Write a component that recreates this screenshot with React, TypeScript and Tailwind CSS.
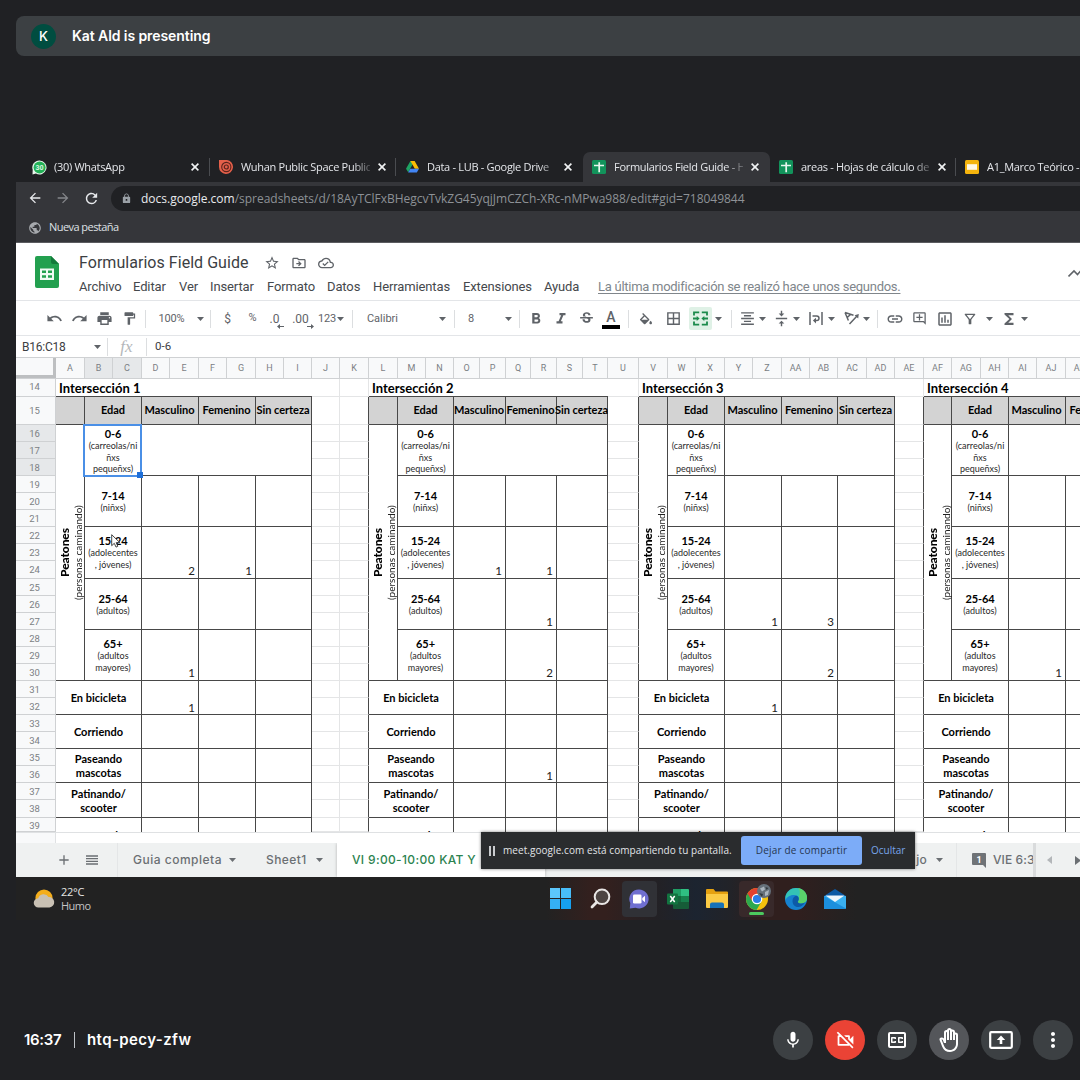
import React from 'react';
import type { ReactNode } from 'react';
import {
  MdAdd,
  MdArrowBack,
  MdArrowForward,
  MdBorderAll,
  MdFormatAlignCenter,
  MdFormatBold,
  MdFormatColorFill,
  MdFormatItalic,
  MdFormatPaint,
  MdFunctions,
  MdLink,
  MdLock,
  MdMic,
  MdMoreVert,
  MdOutlineAddComment,
  MdOutlineAssessment,
  MdOutlineBackHand,
  MdOutlineClosedCaption,
  MdOutlineCloudDone,
  MdOutlineDriveFileMove,
  MdOutlineFilterAlt,
  MdOutlineVideocamOff,
  MdPrint,
  MdPublic,
  MdRedo,
  MdRefresh,
  MdReorder,
  MdStarBorder,
  MdStrikethroughS,
  MdUndo,
  MdVerticalAlignCenter,
} from 'react-icons/md';

/* ---------- shared bits ---------- */

const Caret = () => (
  <svg className="h-[4px] w-[7px] shrink-0" viewBox="0 0 7 4" fill="currentColor">
    <path d="M0 0h7L3.500 4z" />
  </svg>
);

const Slot = ({ w, children }: { w: string; children?: ReactNode }) => (
  <div className={`flex h-full shrink-0 items-center justify-center whitespace-nowrap ${w}`}>{children}</div>
);

const Sep = ({ w }: { w: string }) => (
  <Slot w={w}>
    <div className="h-[18px] w-px bg-[#dcdee0]" />
  </Slot>
);

/* ---------- brand icons ---------- */

const WhatsAppIcon = () => (
  <svg className="size-[15px]" viewBox="0 0 15 15">
    <path d="M7.500.5a7 7 0 1 1-3.600 13L.5 14.500.7 9.800A7 7 0 0 1 7.500.5z" fill="#e9f5ec" />
    <circle cx="7.600" cy="7.400" r="6" fill="#23b257" />
    <text x="7.600" y="9.900" textAnchor="middle" fontSize="7" fontWeight="700" fill="#d9f3e1" fontFamily="Roboto, sans-serif">30</text>
  </svg>
);

const TargetIcon = () => (
  <svg className="size-[14px]" viewBox="0 0 14 14">
    <path d="M0 0h8a7 7 0 1 1-8 7z" fill="#e5604a" />
    <circle cx="7.300" cy="7" r="4.600" fill="none" stroke="#5a241d" strokeWidth="1.100" />
    <circle cx="7.300" cy="7" r="2" fill="none" stroke="#5a241d" strokeWidth="1.200" />
  </svg>
);

const DriveIcon = () => (
  <svg className="ml-px h-[12px] w-[13px]" viewBox="0 0 13 12">
    <path d="M4.400 0h4.200L4.300 7.500 2.200 11.300 0 7.700z" fill="#1ea362" />
    <path d="M4.400 0h4.200L13 7.700H8.800z" fill="#fbbc04" />
    <path d="M4.300 7.700H13l-2.200 3.900H2.100z" fill="#4285f4" />
  </svg>
);

const SheetsTabIcon = () => (
  <svg className="size-[14px]" viewBox="0 0 14 14">
    <rect width="14" height="14" rx="1.500" fill="#12935b" />
    <path d="M7.200 2.200v10M2 5.500h10" stroke="#e8f6ef" strokeWidth="1.700" />
  </svg>
);

const SlidesTabIcon = () => (
  <svg className="size-[14px]" viewBox="0 0 14 14">
    <rect width="14" height="14" rx="1.500" fill="#f5b40d" />
    <rect x="2" y="4.200" width="10" height="5.600" fill="#fff8e6" />
  </svg>
);

const SheetsLogo = () => (
  <svg className="h-[32px] w-[24px]" viewBox="0 0 24 32">
    <path d="M2 0h14l8 8v22a2 2 0 0 1-2 2H2a2 2 0 0 1-2-2V2a2 2 0 0 1 2-2z" fill="#23a04f" />
    <path d="M16 0l8 8h-6a2 2 0 0 1-2-2z" fill="#147a3b" />
    <path d="M5 12.500h14V24H5zM7 14.600v2.500h4v-2.500zm6 0v2.500h4v-2.500zM7 19.200v2.600h4v-2.600zm6 0v2.600h4v-2.600z" fill="#f1faf4" fillRule="evenodd" />
  </svg>
);

/* ---------- browser chrome ---------- */

type TabProps = { icon: ReactNode; title: string; width: string; active?: boolean; divider?: boolean };

const BrowserTab = ({ icon, title, width, active, divider }: TabProps) => (
  <div className={`relative flex h-[30px] shrink-0 items-center pl-[10px] ${width} ${active ? 'rounded-t-[7px] bg-[#35363a]' : ''}`}>
    <div className="-ml-px flex w-[22px] shrink-0 items-center">{icon}</div>
    <div className="w-[129px] overflow-hidden text-[11px] leading-[16px] tracking-[-0.3px] whitespace-nowrap text-[#e4e6ea] [mask-image:linear-gradient(to_right,black_112px,transparent_134px)]">
      {title}
    </div>
    <svg className="ml-[8px] size-[8px] shrink-0" viewBox="0 0 8 8" fill="none" stroke="#f1f3f4" strokeWidth="1.600">
      <path d="M.6.600l6.800 6.800M7.400.600L.6 7.400" />
    </svg>
    {divider && <div className="absolute top-[6px] right-0 h-[18px] w-px bg-[#4a4c50]" />}
  </div>
);

const BrowserChrome = () => (
  <div className="font-['Open_Sans',sans-serif]">
    <div className="flex h-[30px] overflow-hidden bg-[#202124] pl-[7px]">
      <BrowserTab icon={<WhatsAppIcon />} title="(30) WhatsApp" width="w-[187px]" divider />
      <BrowserTab icon={<TargetIcon />} title="Wuhan Public Space Public Life" width="w-[186px]" divider />
      <BrowserTab icon={<DriveIcon />} title="Data - LUB - Google Drive" width="w-[187px]" />
      <BrowserTab icon={<SheetsTabIcon />} title="Formularios Field Guide - Hojas" width="w-[187px]" active />
      <BrowserTab icon={<SheetsTabIcon />} title="areas - Hojas de cálculo de Google" width="w-[186px]" divider />
      <BrowserTab icon={<SlidesTabIcon />} title="A1_Marco Teórico - Pres" width="w-[186px]" />
    </div>
    <div className="flex h-[32px] items-center bg-[#35363a] pl-[11px]">
      <MdArrowBack className="size-[16px] text-[#e8eaed]" />
      <MdArrowForward className="ml-[12px] size-[16px] text-[#84868a]" />
      <MdRefresh className="ml-[12px] size-[17px] text-[#e8eaed]" />
      <div className="mt-px ml-[11px] flex h-[25px] flex-1 items-center overflow-hidden rounded-l-full bg-[#202124] pl-[10px] text-[12px] whitespace-nowrap">
        <MdLock className="size-[11px] text-[#9aa0a6]" />
        <span className="ml-[9px] text-[#e8eaed]">docs.google.com</span>
        <span className="tracking-[-0.02px] text-[#8d9196]">/spreadsheets/d/18AyTClFxBHegcvTvkZG45yqjJmCZCh-XRc-nMPwa988/edit#gid=718049844</span>
      </div>
    </div>
    <div className="flex h-[29px] items-center border-b border-[#5b5c60] bg-[#35363a] pl-[12px]">
      <MdPublic className="size-[14px] text-[#a6a9ad]" />
      <span className="mb-px ml-[7px] text-[11px] tracking-[-0.55px] text-[#dfe1e5]">Nueva pestaña</span>
    </div>
  </div>
);

/* ---------- sheets header ---------- */

const DocHeader = () => (
  <div className="relative h-[58px] border-b border-[#e3e5e8] font-['Roboto',sans-serif]">
    <div className="flex">
      <div className="w-[63px] shrink-0 pt-[13px] pl-[19px]">
        <SheetsLogo />
      </div>
      <div>
        <div className="flex h-[32px] items-center pt-[8px] text-[#5f6368]">
          <span className="text-[16px] tracking-[0.04px] text-[#3c4043]">Formularios Field Guide</span>
          <MdStarBorder className="ml-[16px] size-[16px]" />
          <MdOutlineDriveFileMove className="ml-[11px] size-[16px]" />
          <MdOutlineCloudDone className="ml-[11px] size-[16px]" />
        </div>
        <div className="flex h-[24px] items-center whitespace-nowrap text-[13px] tracking-[-0.12px] text-[#45484c]">
          <span className="w-[54px]">Archivo</span>
          <span className="w-[46px]">Editar</span>
          <span className="w-[31px]">Ver</span>
          <span className="w-[57px]">Insertar</span>
          <span className="w-[60px]">Formato</span>
          <span className="w-[46px]">Datos</span>
          <span className="w-[90px]">Herramientas</span>
          <span className="w-[81px]">Extensiones</span>
          <span className="w-[54px]">Ayuda</span>
          <span className="tracking-[-0.27px] text-[#80868b] underline underline-offset-[2px]">La última modificación se realizó hace unos segundos.</span>
        </div>
      </div>
    </div>
    <svg className="absolute top-[25px] right-0 h-[10px] w-[12px]" viewBox="0 0 12 10" fill="none" stroke="#5f6368" strokeWidth="1.600">
      <path d="M.5 8.500L6 3l3.500 3.500L13 2.500" />
    </svg>
  </div>
);

const MergeIcon = () => (
  <svg className="size-[15px]" viewBox="0 0 15 15" fill="none" stroke="#1b8a4b" strokeWidth="1.800">
    <path d="M1 4.500V1.300h5.200M8.800 1.300H14v3.200M14 10.500v3.200H8.800M6.200 13.700H1v-3.200M0 7.500h5M15 7.500h-5" />
    <path d="M3.700 4.900L6.600 7.500 3.700 10.100zM11.300 4.900L8.400 7.500l2.900 2.600z" fill="#1b8a4b" stroke="none" />
  </svg>
);

const WrapIcon = () => (
  <svg className="h-[13px] w-[14px]" viewBox="0 0 14 13" fill="none" stroke="currentColor" strokeWidth="1.500">
    <path d="M1 0v13M13 0v13M3.500 4h4.200a2.200 2.200 0 0 1 0 4.600H5" />
    <path d="M7 5.800v5.600L3.900 8.600z" fill="currentColor" stroke="none" />
  </svg>
);

const RotateIcon = () => (
  <svg className="size-[15px]" viewBox="0 0 15 15" fill="none" stroke="currentColor" strokeWidth="1.500">
    <path d="M1 1.500l8.500 2.700M1 1.500l3.400 8M3.200 6.400L6.600 3.500M5.500 13l7.500-8" />
    <path d="M14.800 3l-.6 4.600-3.600-3.400z" fill="currentColor" stroke="none" />
  </svg>
);

const Decimals = ({ label, right }: { label: string; right?: boolean }) => (
  <div className="relative leading-none">
    {label}
    <svg className="absolute top-[11px] right-[-5px] h-[5px] w-[7px]" viewBox="0 0 7 5" fill="currentColor">
      {right ? <path d="M7 2.500L4 0v2H0v1h4v2z" /> : <path d="M0 2.500L3 0v2h4v1H3v2z" />}
    </svg>
  </div>
);

const Toolbar = () => (
  <div className="flex h-[35px] items-center border-b border-[#e3e5e8] pt-px pl-[25px] font-['Roboto',sans-serif] text-[11px] text-[#5f6368]">
    <Slot w="w-[26px]"><MdUndo className="size-[17px]" /></Slot>
    <Slot w="w-[25px]"><MdRedo className="size-[17px]" /></Slot>
    <Slot w="w-[25px]"><MdPrint className="size-[17px]" /></Slot>
    <Slot w="w-[25px]"><MdFormatPaint className="size-[15px]" /></Slot>
    <Sep w="w-[7px]" />
    <Slot w="w-[45px]"><span className="pt-px tracking-[-0.2px]">100%</span></Slot>
    <Slot w="w-[12px]"><Caret /></Slot>
    <Sep w="w-[9px]" />
    <Slot w="w-[25px]"><span className="text-[12px]">$</span></Slot>
    <Slot w="w-[25px]">%</Slot>
    <Slot w="w-[19px]"><span className="text-[12px]"><Decimals label=".0" /></span></Slot>
    <Slot w="w-[33px]"><span className="text-[12px]"><Decimals label=".00" right /></span></Slot>
    <Slot w="w-[20px]"><span className="pt-px text-[11px] tracking-[-0.2px]">123</span></Slot>
    <Slot w="w-[6px]"><Caret /></Slot>
    <Sep w="w-[19px]" />
    <Slot w="w-[41px]"><span className="pt-px">Calibri</span></Slot>
    <Slot w="w-[33px]" />
    <Slot w="w-[12px]"><Caret /></Slot>
    <Sep w="w-[12px]" />
    <Slot w="w-[22px]"><span className="pt-px">8</span></Slot>
    <Slot w="w-[20px]" />
    <Slot w="w-[13px]"><Caret /></Slot>
    <Sep w="w-[9px]" />
    <Slot w="w-[24px]"><MdFormatBold className="size-[18px] shrink-0" /></Slot>
    <Slot w="w-[26px]"><MdFormatItalic className="size-[18px] shrink-0" /></Slot>
    <Slot w="w-[24px]"><MdStrikethroughS className="size-[17px] shrink-0" /></Slot>
    <Slot w="w-[26px]">
      <div className="flex flex-col items-center pt-px">
        <span className="text-[14px] leading-[14px] font-medium">A</span>
        <span className="mt-px h-[4px] w-[18px] bg-black" />
      </div>
    </Slot>
    <Sep w="w-[9px]" />
    <Slot w="w-[26px]">
      {/* bucket without its base bar */}
      <div className="h-[12px] overflow-hidden"><MdFormatColorFill className="size-[16px] shrink-0" /></div>
    </Slot>
    <Slot w="w-[28px]"><MdBorderAll className="size-[17px] shrink-0" /></Slot>
    <Slot w="w-[26px]">
      <div className="flex size-[23px] items-center justify-center rounded-[2px] bg-[#dff1e6]"><MergeIcon /></div>
    </Slot>
    <Slot w="w-[11px]"><Caret /></Slot>
    <Sep w="w-[14px]" />
    <Slot w="w-[18px]"><MdFormatAlignCenter className="size-[17px] shrink-0" /></Slot>
    <Slot w="w-[12px]"><Caret /></Slot>
    <Slot w="w-[4px]" />
    <Slot w="w-[19px]"><MdVerticalAlignCenter className="size-[17px] shrink-0" /></Slot>
    <Slot w="w-[11px]"><Caret /></Slot>
    <Slot w="w-[4px]" />
    <Slot w="w-[20px]"><WrapIcon /></Slot>
    <Slot w="w-[10px]"><Caret /></Slot>
    <Slot w="w-[4px]" />
    <Slot w="w-[22px]"><RotateIcon /></Slot>
    <Slot w="w-[8px]"><Caret /></Slot>
    <Sep w="w-[15px]" />
    <Slot w="w-[19px]"><MdLink className="size-[18px] shrink-0" /></Slot>
    <Slot w="w-[31px]"><MdOutlineAddComment className="size-[15px] shrink-0" /></Slot>
    <Slot w="w-[19px]"><MdOutlineAssessment className="size-[18px] shrink-0" /></Slot>
    <Slot w="w-[31px]"><MdOutlineFilterAlt className="size-[16px] shrink-0" /></Slot>
    <Slot w="w-[9px]"><Caret /></Slot>
    <Slot w="w-[30px]"><MdFunctions className="size-[18px] shrink-0" /></Slot>
    <Slot w="w-px"><Caret /></Slot>
  </div>
);

const FormulaBar = () => (
  <div className="flex h-[21px] items-center font-['Roboto',sans-serif] text-[12px] text-[#3c4043]">
    <span className="w-[76px] pl-[6px] tracking-[-0.24px]">B16:C18</span>
    <span className="flex w-[11px] justify-center text-[#5f6368]"><Caret /></span>
    <Sep w="w-[9px]" />
    <span className="w-[29px] text-center font-['Liberation_Serif',serif] text-[17px] leading-[20px] text-[#b4b7ba] italic">fx</span>
    <Sep w="w-[11px]" />
    <span className="ml-[3px] text-[11.500px]">0-6</span>
  </div>
);

/* ---------- grid ---------- */

const columns: [string, string, boolean?][] = [
  ['A', 'w-[29px]'], ['B', 'w-[28px]', true], ['C', 'w-[29px]', true], ['D', 'w-[28px]'], ['E', 'w-[29px]'],
  ['F', 'w-[28px]'], ['G', 'w-[29px]'], ['H', 'w-[28px]'], ['I', 'w-[28px]'], ['J', 'w-[28px]'], ['K', 'w-[29px]'],
  ['L', 'w-[29px]'], ['M', 'w-[28px]'], ['N', 'w-[28px]'], ['O', 'w-[26px]'], ['P', 'w-[26px]'], ['Q', 'w-[25px]'],
  ['R', 'w-[26px]'], ['S', 'w-[26px]'], ['T', 'w-[25px]'], ['U', 'w-[31px]'], ['V', 'w-[29px]'], ['W', 'w-[28px]'],
  ['X', 'w-[29px]'], ['Y', 'w-[28px]'], ['Z', 'w-[29px]'], ['AA', 'w-[28px]'], ['AB', 'w-[28px]'], ['AC', 'w-[29px]'],
  ['AD', 'w-[28px]'], ['AE', 'w-[29px]'], ['AF', 'w-[28px]'], ['AG', 'w-[29px]'], ['AH', 'w-[28px]'], ['AI', 'w-[28px]'],
  ['AJ', 'w-[29px]'], ['AK', 'w-[28px]'],
];

const rowHeights = [
  'h-[18px]', 'h-[28px]', 'h-[17px]', 'h-[17px]', 'h-[17px]', 'h-[17px]', 'h-[17px]', 'h-[17px]', 'h-[17px]',
  'h-[17px]', 'h-[18px]', 'h-[17px]', 'h-[17px]', 'h-[17px]', 'h-[17px]', 'h-[17px]', 'h-[17px]', 'h-[17px]',
  'h-[17px]', 'h-[17px]', 'h-[17px]', 'h-[17px]', 'h-[17px]', 'h-[17px]', 'h-[18px]', 'h-[14px]',
];

const ColumnHeaders = () => (
  <div className="flex h-[22px] overflow-hidden border-t border-b border-[#cfd1d3] bg-[#f8f9fa] font-['Roboto',sans-serif] text-[9px] text-[#7b7f84]">
    <div className="w-[40px] shrink-0 border-r-[3px] border-b-[3px] border-[#bdbfc1]" />
    {columns.map(([name, width, selected]) => (
      <div key={name} className={`flex shrink-0 items-center justify-center border-r border-[#cfd1d3] pt-px ${width} ${selected ? 'bg-[#e6e8ea]' : ''}`}>
        {name}
      </div>
    ))}
  </div>
);

const RowHeaders = () => (
  <div className="w-[40px] shrink-0 font-['Roboto',sans-serif] text-[9.500px] leading-[15px] text-[#7b7f84]">
    {rowHeights.map((h, i) => (
      <div
        key={i}
        className={`flex justify-center overflow-hidden border-r border-b border-[#cfd1d3] pr-[2px] ${h} ${i === 0 || i === 25 ? '' : i === 1 ? 'pt-[6px]' : 'pt-px'} ${i >= 2 && i <= 4 ? 'bg-[#e6e8ea]' : 'bg-[#f8f9fa]'}`}
      >
        {i + 14}
      </div>
    ))}
  </div>
);

const Gutter = ({ cols }: { cols: string[] }) => (
  <>
    {cols.map((w, c) => (
      <div key={c} className={`shrink-0 ${w}`}>
        {rowHeights.map((h, i) => (
          <div key={i} className={`border-b border-b-[#e4e5e6] border-r ${h} ${c === cols.length - 1 && i > 0 ? 'border-r-[#484848]' : 'border-r-[#e4e5e6]'}`} />
        ))}
      </div>
    ))}
  </>
);

const ages: { label: string; notes: string[]; tall?: boolean }[] = [
  { label: '0-6', notes: ['(carreolas/ni', 'ñxs', 'pequeñxs)'] },
  { label: '7-14', notes: ['(niñxs)'] },
  { label: '15-24', notes: ['(adolecentes', ', jóvenes)'], tall: true },
  { label: '25-64', notes: ['(adultos)'] },
  { label: '65+', notes: ['(adultos', 'mayores)'] },
];

const activities: [string[], string][] = [
  [['En bicicleta'], 'h-[34px]'],
  [['Corriendo'], 'h-[34px]'],
  [['Paseando', 'mascotas'], 'h-[34px]'],
  [['Patinando/', 'scooter'], 'h-[35px]'],
  [['Esperando'], 'h-[14px]'],
];

const LINE = 'border-[#484848]';

type BlockProps = {
  title: string;
  first: string;
  label: string;
  wide: string;
  data: [string, string, string];
  values: Record<string, number>;
};

const Block = ({ title, first, label, wide, data, values }: BlockProps) => (
  <div className="shrink-0 font-['Lato',sans-serif] text-[11px] text-black">
    <div className={`h-[18px] border-b pl-[3px] text-[13px] leading-[18px] font-bold ${LINE}`}>{title}</div>
    <div className="flex h-[28px] font-bold">
      <div className={`border-r border-b bg-[#d3d3d3] ${first} ${LINE}`} />
      <div className={`flex items-center justify-center border-r border-b bg-[#d3d3d3] ${label} ${LINE}`}>Edad</div>
      {['Masculino', 'Femenino', 'Sin certeza'].map((t, i) => (
        <div key={t} className={`flex items-center justify-center border-r border-b bg-[#d3d3d3] whitespace-nowrap ${data[i]} ${LINE}`}>
          <span className="-ml-px shrink-0 tracking-[-0.04px]">{t}</span>
        </div>
      ))}
    </div>
    <div className="flex">
      <div className={`flex justify-center border-r border-b ${first} ${LINE}`}>
        <div className="ml-[2px] flex shrink-0 rotate-180 flex-col items-center justify-center text-center whitespace-nowrap [writing-mode:vertical-rl]">
          <div className="text-[12px] leading-[15px] font-black tracking-[-0.1px]">Peatones</div>
          <div className="text-[10px] leading-[13px] text-[#222]">(personas caminando)</div>
        </div>
      </div>
      <div>
        {ages.map(({ label: age, notes, tall }, r) => (
          <div key={age} className={`flex ${tall ? 'h-[52px]' : 'h-[51px]'}`}>
            <div className={`flex flex-col items-center justify-center border-r border-b text-center ${notes.length === 3 ? 'pt-[2px]' : ''} ${label} ${LINE}`}>
              <div className="leading-[13px] font-bold tracking-[-0.1px]">{age}</div>
              {notes.map((n) => (
                <div key={n} className={`text-[9px] whitespace-nowrap text-[#2a2a2a] ${notes.length === 3 ? 'leading-[11.500px]' : 'leading-[12px]'}`}>{n}</div>
              ))}
            </div>
            {data.map((w, c) => (
              <div key={c} className={`flex items-end justify-end border-b pr-[3px] text-[11.500px] leading-[14px] text-[#222] ${w} ${LINE} ${r > 0 || c === 2 ? 'border-r' : ''}`}>
                {values[`${r},${c}`]}
              </div>
            ))}
          </div>
        ))}
      </div>
    </div>
    {activities.map(([lines, h], r) => (
      <div key={r} className={`flex ${h}`}>
        <div className={`flex shrink-0 flex-col items-center overflow-hidden border-r font-bold ${r === 4 ? 'justify-start pt-[11px]' : 'justify-center border-b pt-px'} ${wide} ${LINE}`}>
          {lines.map((t) => (
            <div key={t} className="leading-[14px]">{t}</div>
          ))}
        </div>
        {data.map((w, c) => (
          <div key={c} className={`flex items-end justify-end border-r pr-[3px] text-[11.500px] leading-[13px] text-[#222] ${r === 4 ? '' : 'border-b'} ${w} ${LINE}`}>
            {values[`${r + 5},${c}`]}
          </div>
        ))}
      </div>
    ))}
  </div>
);

const Grid = () => (
  <div className="relative flex h-[453px] overflow-hidden bg-white">
    <RowHeaders />
    <Block title="Intersección 1" first="w-[29px]" label="w-[57px]" wide="w-[86px]" data={['w-[57px]', 'w-[57px]', 'w-[56px]']} values={{ '2,0': 2, '2,1': 1, '4,0': 1, '5,0': 1 }} />
    <Gutter cols={['w-[28px]', 'w-[29px]']} />
    <Block title="Intersección 2" first="w-[29px]" label="w-[56px]" wide="w-[85px]" data={['w-[52px]', 'w-[51px]', 'w-[51px]']} values={{ '2,0': 1, '2,1': 1, '3,1': 1, '4,1': 2, '7,1': 1 }} />
    <Gutter cols={['w-[31px]']} />
    <Block title="Intersección 3" first="w-[29px]" label="w-[57px]" wide="w-[86px]" data={['w-[57px]', 'w-[56px]', 'w-[57px]']} values={{ '3,0': 1, '3,1': 3, '4,1': 2, '5,0': 1 }} />
    <Gutter cols={['w-[29px]']} />
    <Block title="Intersección 4" first="w-[28px]" label="w-[57px]" wide="w-[85px]" data={['w-[57px]', 'w-[57px]', 'w-[57px]']} values={{ '4,0': 1 }} />
    {/* selected range B16:C18 */}
    <div className="absolute top-[45px] left-[67px] h-[53px] w-[59px] border-2 border-[#4a8fe6]">
      <div className="absolute right-[-3px] bottom-[-3px] size-[6px] bg-[#1f6fd8]" />
    </div>
    {/* mouse pointer */}
    <svg className="absolute top-[155px] left-[95px] h-[14px] w-[10px]" viewBox="0 0 10 14">
      <path d="M.7.700v11l2.600-2.400 1.700 3.800 1.800-.8L5.200 8.600h3.600z" fill="#fff" stroke="#333" strokeWidth=".9" />
    </svg>
  </div>
);

/* ---------- sheet tabs + sharing bar ---------- */

const SheetTabs = () => (
  <div className="relative">
    <div className="flex h-[11px] border-t border-[#dfe1e3] bg-white">
      <div className="w-[40px] border-r border-[#dfe1e3] bg-[#f8f9fa]" />
    </div>
    <div className="flex h-[34px] items-center overflow-hidden bg-[#eff1f1] font-['Inter',sans-serif] text-[12px] font-medium whitespace-nowrap text-[#6b6f73]">
      <Slot w="w-[95px]"><MdAdd className="size-[16px]" stroke="currentColor" /></Slot>
      <Slot w="w-0"><div className="-ml-[38px]"><MdReorder className="size-[16px]" /></div></Slot>
      <div className="ml-[6px] flex h-full w-[140px] shrink-0 items-center border-l border-[#e4e6e7] pl-[15px]">
        <span className="tracking-[0.5px]">Guia completa</span>
        <span className="ml-[7px]"><Caret /></span>
      </div>
      <div className="flex h-full w-[80px] shrink-0 items-center">
        <span className="pl-[9px] tracking-[0.4px]">Sheet1</span>
        <span className="ml-[9px]"><Caret /></span>
      </div>
      <div className="flex h-full w-[208px] shrink-0 items-center bg-white pl-[15px] tracking-[0.35px] text-[#2c8350] shadow-[0_0_3px_rgba(60,64,67,0.35)]">VI 9:00-10:00 KAT Y</div>
      <div className="flex h-full w-[412px] shrink-0 items-center justify-end border-r border-[#e4e6e7] pr-[13px]">
        <span className="tracking-[0.3px]">jo</span>
        <span className="ml-[9px]"><Caret /></span>
      </div>
      <div className="flex h-full w-[79px] shrink-0 items-center overflow-hidden border-r-[3px] border-[#d9dbdc] pl-[15px]">
        <svg className="h-[15px] w-[14px] shrink-0" viewBox="0 0 14 15">
          <path d="M1 0h12a1 1 0 0 1 1 1v14l-3-3H1a1 1 0 0 1-1-1V1a1 1 0 0 1 1-1z" fill="#6f7377" />
          <text x="7" y="9.500" textAnchor="middle" fontSize="9" fontWeight="700" fill="#fff" fontFamily="Roboto, sans-serif">1</text>
        </svg>
        <span className="ml-[7px] tracking-[0.1px]">VIE 6:30</span>
      </div>
      <svg className="ml-[11px] h-[8px] w-[5px] shrink-0" viewBox="0 0 5 8"><path d="M5 0v8L0 4z" fill="#b3b6b9" /></svg>
      <svg className="ml-[23px] h-[9px] w-[6px] shrink-0" viewBox="0 0 6 9"><path d="M0 0v9l6-4.500z" fill="#6b6f73" /></svg>
    </div>
    <div className="absolute top-0 left-[465px] flex h-[37px] w-[434px] items-center bg-[#2a2c2e] font-['Open_Sans',sans-serif] text-[10px] whitespace-nowrap shadow-[0_0_3px_rgba(0,0,0,0.5)]">
      <div className="ml-[8px] flex gap-[2px]">
        <div className="h-[10px] w-[2px] bg-[#c9cbce]" />
        <div className="h-[10px] w-[2px] bg-[#c9cbce]" />
      </div>
      <span className="ml-[8px] w-[238px] tracking-[0.06px] text-[#e2e4e8]">meet.google.com está compartiendo tu pantalla.</span>
      <div className="flex h-[29px] w-[121px] shrink-0 items-center justify-center rounded-[3px] bg-[#7cacf8] tracking-[0.2px] text-[#26364f]">Dejar de compartir</div>
      <span className="ml-[9px] text-[#78a5ea]">Ocultar</span>
    </div>
  </div>
);

/* ---------- taskbar ---------- */

const Taskbar = () => (
  <div className="relative flex h-[43px] items-center bg-[#222222] bg-[linear-gradient(90deg,transparent_0,transparent_530px,#33201e_575px,#33201e_590px,#232125_640px,#1c2430_680px,#222328_715px,#301f1e_745px,#301f1e_780px,transparent_840px)] font-['Open_Sans',sans-serif] text-[11px] leading-[14px]">
    <svg className="ml-[17px] h-[20px] w-[22px] shrink-0" viewBox="0 0 22 20">
      <circle cx="11" cy="9" r="8.600" fill="#f4ae1c" />
      <path d="M5.500 18.500a4.600 4.600 0 0 1-.3-9.200 5.600 5.600 0 0 1 10.300-1.200 5.200 5.200 0 0 1 1 10.400z" fill="#c9c1b4" />
    </svg>
    <div className="ml-[6px] w-[465px] text-[#e6e6e6]">
      <div className="tracking-[-0.3px]">22°C</div>
      <div className="tracking-[-0.5px] text-[#c4c4c4]">Humo</div>
    </div>
    <Slot w="w-[69px]">
      <div className="grid size-[21px] grid-cols-2 gap-px">
        <div className="bg-[#5cc6fb]" /><div className="bg-[#48bdf9]" /><div className="bg-[#35b0f5]" /><div className="bg-[#16a0f0]" />
      </div>
    </Slot>
    <Slot w="w-[10px]">
      <svg className="size-[21px] shrink-0" viewBox="0 0 21 21" fill="none">
        <circle cx="12" cy="8.800" r="7.300" fill="#4d4442" stroke="#e9e6e5" strokeWidth="2" />
        <path d="M6.700 14.300L2 19" stroke="#e9e6e5" strokeWidth="2.800" strokeLinecap="round" />
      </svg>
    </Slot>
    <Slot w="w-[68px]">
      <div className="flex h-[36px] w-[35px] items-center justify-center rounded-[4px] bg-[#303136]">
        <svg className="size-[20px]" viewBox="0 0 20 20">
          <path d="M10 .5a9.500 9.500 0 1 1-3.500 18.300L.8 19.500l.5-5.200A9.500 9.500 0 0 1 10 .5z" fill="#6f6fd0" />
          <rect x="4" y="5.500" width="8.500" height="9" rx="1.300" fill="#fff" />
          <path d="M13.300 9l2.700-2.300v6.600L13.300 11z" fill="#fff" />
        </svg>
      </div>
    </Slot>
    <Slot w="w-[9px]">
      <svg className="h-[20px] w-[22px] shrink-0" viewBox="0 0 22 20">
        <path d="M6 0h8v7H6z" fill="#1f9d63" /><path d="M14 0h7a1 1 0 0 1 1 1v6h-8z" fill="#2fbf82" />
        <path d="M6 7h8v6H6z" fill="#14683e" /><path d="M14 7h8v6h-8z" fill="#17804d" />
        <path d="M6 13h16v6a1 1 0 0 1-1 1H7a1 1 0 0 1-1-1z" fill="#165c38" />
        <rect y="4.500" width="11" height="11" rx="1" fill="#127440" />
        <path d="M3.300 7l4.400 6M7.700 7l-4.400 6" stroke="#fff" strokeWidth="1.500" />
      </svg>
    </Slot>
    <Slot w="w-[69px]">
      <svg className="h-[19px] w-[22px]" viewBox="0 0 22 19">
        <path d="M0 1a1 1 0 0 1 1-1h6.500l2 2.500H21a1 1 0 0 1 1 1V10H0z" fill="#e5a110" />
        <path d="M0 5h22v13a1 1 0 0 1-1 1H1a1 1 0 0 1-1-1z" fill="#fbcb45" />
        <path d="M4 19v-3.500a2 2 0 0 1 2-2h10a2 2 0 0 1 2 2V19z" fill="#1672b8" />
      </svg>
    </Slot>
    <Slot w="w-[11px]">
      <div className="relative flex h-[36px] w-[35px] shrink-0 items-center justify-center rounded-[4px] bg-[#38292a]">
        <svg className="size-[22px]" viewBox="0 0 22 22">
          <circle cx="11" cy="11" r="11" fill="#f4c20d" />
          <path d="M11 11L1.500 5.500A11 11 0 0 0 10.500 22L15.500 13.500z" fill="#2da94f" />
          <path d="M11 5.500h9.500A11 11 0 0 0 1.500 5.500L6 13z" fill="#e3412f" />
          <circle cx="11" cy="11" r="5.300" fill="#fff" />
          <circle cx="11" cy="11" r="4.100" fill="#2a7de9" />
        </svg>
        <svg className="absolute top-[3px] right-[3px] size-[14px]" viewBox="0 0 14 14">
          <circle cx="7" cy="7" r="7" fill="#66707a" />
          <path d="M3 4.500l4-2 1 3-3 2zM8 8l4-2-1 5-3 1z" fill="#aab4bd" />
          <path d="M2 9l4 1-1 3zM8.500 3l3 1-2 2z" fill="#33393f" />
        </svg>
        <div className="absolute bottom-[2px] left-[10px] h-[3px] w-[15px] rounded-full bg-[#4cc95f]" />
      </div>
    </Slot>
    <Slot w="w-[67px]">
      <svg className="size-[22px]" viewBox="0 0 22 22">
        <circle cx="11" cy="11" r="11" fill="#1681cf" />
        <path d="M.5 8.500C2 3 6 0 11 0c6.500 0 11 4.800 11 9.800 0 3.700-2.700 5.700-5.600 5.700-2.300 0-3.600-.9-3.600-1.800 0-.7 1-1.200 1-3C13.800 8.500 12 7 9 7 5.500 7 2 8.500.5 12z" fill="#34c3b5" />
        <path d="M13 0c5.500.8 9 5 9 9.800 0 3.700-2.700 5.700-5.600 5.700-2.300 0-3.600-.9-3.600-1.800 0-.7 1-1.200 1-3C13.800 7 16.500 4 13 0z" fill="#5ad36b" />
        <path d="M7.500 13c0-3 1.600-5 4-5.300 1.500.5 2.300 1.600 2.300 3 0 1.800-1 2.300-1 3 0 .9 1.300 1.800 3.600 1.800 1.300 0 2.600-.4 3.600-1.200C18.500 18 15 19 13 19c-3.200 0-5.500-2.600-5.500-6z" fill="#0d5aa7" />
      </svg>
    </Slot>
    <Slot w="w-[11px]">
      <svg className="h-[20px] w-[22px] shrink-0" viewBox="0 0 22 20">
        <path d="M0 7l11-7 11 7v3H0z" fill="#0c59a4" />
        <path d="M0 7h22v12a1 1 0 0 1-1 1H1a1 1 0 0 1-1-1z" fill="#3ab0f0" />
        <path d="M0 7l22 12.600a1 1 0 0 1-1 .4H1a1 1 0 0 1-1-1z" fill="#1c8fdd" />
        <path d="M1.500 6.500h19L11 13z" fill="#eef6fc" />
      </svg>
    </Slot>
  </div>
);

/* ---------- meet shell ---------- */

const RoundButton = ({ color, children }: { color: string; children: ReactNode }) => (
  <div className={`flex size-[40px] shrink-0 items-center justify-center rounded-full text-white ${color}`}>{children}</div>
);

export default function App() {
  return (
    <div className="flex h-[1080px] w-[1080px] flex-col overflow-hidden bg-[#202124]">
      <div className="mt-[16px] ml-[16px] flex h-[40px] shrink-0 items-center rounded-l-[8px] bg-[#3c4043] pl-[15px] font-['Inter',sans-serif] text-[14px] font-medium text-white">
        <div className="flex size-[25px] items-center justify-center rounded-full bg-[#004d40] pt-px text-[13px]">K</div>
        <span className="mb-[2px] ml-[16px] font-semibold tracking-[-0.08px]">Kat Ald is presenting</span>
      </div>

      <div className="mt-[96px] ml-[16px] shrink-0 bg-white">
        <BrowserChrome />
        <DocHeader />
        <Toolbar />
        <FormulaBar />
        <ColumnHeaders />
        <Grid />
        <SheetTabs />
        <Taskbar />
      </div>

      <div className="mt-auto flex h-[80px] shrink-0 items-center justify-between pr-[7px] pl-[24px] font-['Inter',sans-serif] text-[15px] font-medium text-white">
        <div className="flex items-center">
          <span className="w-[50px] font-semibold tracking-[-0.3px]">16:37</span>
          <div className="h-[16px] w-px bg-[#bdc1c6]" />
          <span className="ml-[12px] font-semibold tracking-[0.4px]">htq-pecy-zfw</span>
        </div>
        <div className="flex gap-[12px]">
          <RoundButton color="bg-[#3c4043]"><MdMic className="size-[20px]" /></RoundButton>
          <RoundButton color="bg-[#ea4335]"><MdOutlineVideocamOff className="size-[21px]" /></RoundButton>
          <RoundButton color="bg-[#3c4043]"><MdOutlineClosedCaption className="size-[24px]" /></RoundButton>
          <RoundButton color="bg-[#54565a]"><MdOutlineBackHand className="size-[24px]" /></RoundButton>
          <RoundButton color="bg-[#3c4043]">
            <svg className="h-[18px] w-[24px]" viewBox="0 0 24 18">
              <rect x="1.200" y="1.200" width="21.600" height="15.600" rx="1" fill="none" stroke="#fff" strokeWidth="2.200" />
              <path d="M12 4.500L7.800 9h2.900v4h2.600V9h2.900z" fill="#fff" />
            </svg>
          </RoundButton>
          <RoundButton color="bg-[#3c4043]"><MdMoreVert className="size-[24px]" /></RoundButton>
        </div>
      </div>
    </div>
  );
}
